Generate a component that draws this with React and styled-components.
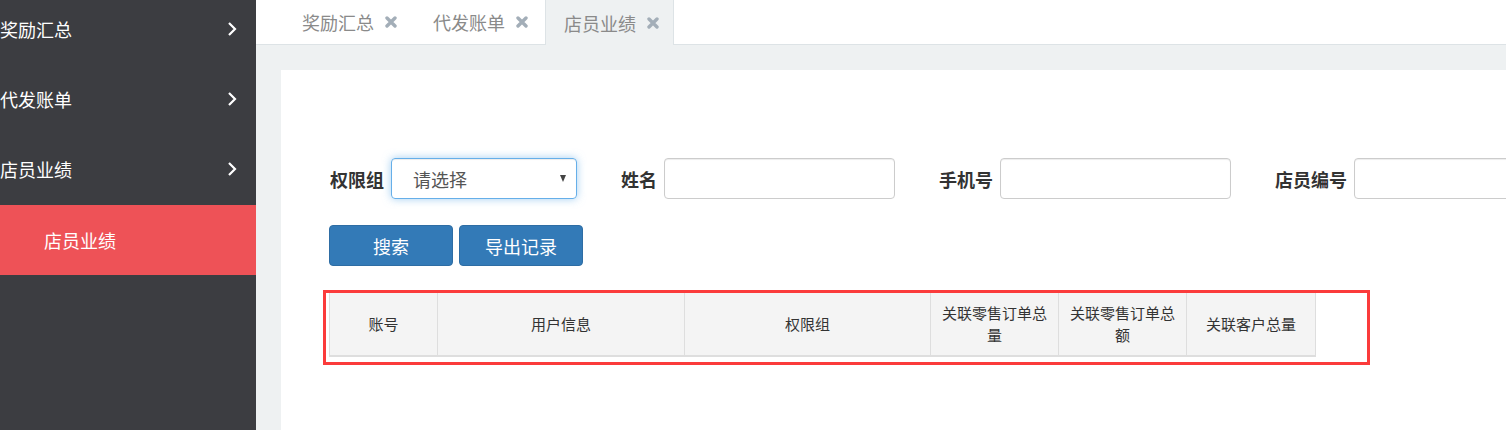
import React from "react";
import styled, { createGlobalStyle } from "styled-components";

const Global = createGlobalStyle`
  html, body, #root { margin: 0; padding: 0; height: 100%; }
  body {
    overflow: hidden;
    font-family: "Noto Sans CJK SC", "Liberation Sans", sans-serif;
    background: #eef1f2;
  }
  * { box-sizing: border-box; }
`;

const Page = styled.div`
  display: flex;
  width: 1506px;
  height: 430px;
  overflow: hidden;
`;

const Sidebar = styled.nav`
  width: 256px;
  flex: 0 0 256px;
  background: #3c3d41;
  display: flex;
  flex-direction: column;
  margin-top: -6px;
`;

const NavItem = styled.div`
  height: 70px;
  flex: none;
  display: flex;
  align-items: center;
  justify-content: space-between;
  padding: 0 19px 0 ${(p) => (p.$sub ? "44px" : "0")};
  background: ${(p) => (p.$active ? "#ee5257" : "transparent")};
  color: #fff;
  font-size: 18px;
  line-height: 1;
  margin-top: ${(p) => (p.$active ? "1px" : "0")};
`;

const Main = styled.div`
  flex: 1;
  min-width: 0;
  display: flex;
  flex-direction: column;
  background: #eef1f2;
`;

const TabBar = styled.div`
  height: 45px;
  background: #fff;
  border-bottom: 1px solid #dde3e6;
  display: flex;
  align-items: stretch;
  padding-left: 27px;
  gap: 2px;
`;

const Tab = styled.div`
  width: 129px;
  display: flex;
  align-items: center;
  padding-left: 18px;
  gap: 11px;
  font-size: 18px;
  color: #8a8a8a;
  background: ${(p) => (p.$active ? "#eef1f2" : "#fff")};
  border-left: 1px solid ${(p) => (p.$active ? "#dde3e6" : "transparent")};
  border-right: 1px solid ${(p) => (p.$active ? "#dde3e6" : "transparent")};
  margin-bottom: ${(p) => (p.$active ? "-1px" : "0")};
`;

const Content = styled.div`
  flex: 1;
  padding: 25px 0 0 25px;
  min-height: 0;
`;

const Panel = styled.div`
  background: #fff;
  height: 100%;
  padding: 88px 0 0 49px;
  overflow: hidden;
`;

const FormRow = styled.div`
  display: flex;
  align-items: center;
  gap: 44px;
  flex-wrap: nowrap;
  white-space: nowrap;
`;

const Field = styled.div`
  display: flex;
  align-items: center;
  gap: 7px;
  flex: none;
`;

const Label = styled.label`
  font-size: 18px;
  font-weight: 700;
  color: #333;
`;

const SelectBox = styled.div`
  width: 186px;
  height: 41px;
  border: 1px solid #66afe9;
  border-radius: 4px;
  box-shadow: inset 0 1px 1px rgba(0, 0, 0, 0.075), 0 0 8px rgba(102, 175, 233, 0.6);
  display: flex;
  align-items: center;
  justify-content: space-between;
  padding: 0 10px 0 21px;
  font-size: 18px;
  color: #555;
`;

const Caret = styled.span`
  width: 0;
  height: 0;
  border-left: 3.5px solid transparent;
  border-right: 3.5px solid transparent;
  border-top: 7px solid #444;
`;

const Input = styled.input`
  width: 231px;
  height: 41px;
  border: 1px solid #ccc;
  border-radius: 4px;
  box-shadow: inset 0 1px 1px rgba(0, 0, 0, 0.075);
  outline: none;
  font-size: 16px;
  padding: 0 12px;
`;

const ButtonRow = styled.div`
  display: flex;
  gap: 6px;
  margin-top: 26px;
  margin-left: -1px;
`;

const Button = styled.button`
  width: 124px;
  height: 41px;
  background: #337ab7;
  border: 1px solid #2e6da4;
  border-radius: 4px;
  color: #fff;
  font-family: inherit;
  font-size: 18px;
  padding: 0;
`;

const Highlight = styled.div`
  margin-top: 24px;
  margin-left: -7px;
  width: 1047px;
  border: 3px solid #fb3b3b;
  padding: 0 0 5px 3px;
`;

const Table = styled.table`
  border-collapse: collapse;
  width: 986px;
  table-layout: fixed;
`;

const Th = styled.th`
  background: #f4f4f4;
  border: 1px solid #dedede;
  border-top: none;
  border-bottom: 2px solid #dedede;
  height: 63px;
  padding: 8px 10px;
  font-size: 15px;
  font-weight: 400;
  line-height: 22px;
  color: #333;
  text-align: center;
  vertical-align: middle;
`;

const Chevron = () => (
  <svg width="10" height="16" viewBox="0 0 10 16">
    <polyline points="2,2 8,8 2,14" fill="none" stroke="#fff" strokeWidth="2.2" />
  </svg>
);

const CloseIcon = () => (
  <svg width="12" height="12" viewBox="0 0 12 12">
    <path d="M2 2 L10 10 M10 2 L2 10" stroke="#a3aeb8" strokeWidth="3.4" strokeLinecap="round" />
  </svg>
);

const columns = [
  { title: "账号", width: 108 },
  { title: "用户信息", width: 247 },
  { title: "权限组", width: 246 },
  { title: "关联零售订单总量", width: 128 },
  { title: "关联零售订单总额", width: 128 },
  { title: "关联客户总量", width: 129 },
];

export default function App() {
  return (
    <>
      <Global />
      <Page>
        <Sidebar>
          <NavItem>
            奖励汇总
            <Chevron />
          </NavItem>
          <NavItem>
            代发账单
            <Chevron />
          </NavItem>
          <NavItem>
            店员业绩
            <Chevron />
          </NavItem>
          <NavItem $active $sub>
            店员业绩
          </NavItem>
        </Sidebar>
        <Main>
          <TabBar>
            <Tab>
              奖励汇总
              <CloseIcon />
            </Tab>
            <Tab>
              代发账单
              <CloseIcon />
            </Tab>
            <Tab $active>
              店员业绩
              <CloseIcon />
            </Tab>
          </TabBar>
          <Content>
            <Panel>
              <FormRow>
                <Field>
                  <Label>权限组</Label>
                  <SelectBox>
                    请选择
                    <Caret />
                  </SelectBox>
                </Field>
                <Field>
                  <Label>姓名</Label>
                  <Input />
                </Field>
                <Field>
                  <Label>手机号</Label>
                  <Input />
                </Field>
                <Field>
                  <Label>店员编号</Label>
                  <Input />
                </Field>
              </FormRow>
              <ButtonRow>
                <Button>搜索</Button>
                <Button>导出记录</Button>
              </ButtonRow>
              <Highlight>
                <Table>
                  <colgroup>
                    {columns.map((c) => (
                      <col key={c.title} style={{ width: c.width }} />
                    ))}
                  </colgroup>
                  <thead>
                    <tr>
                      {columns.map((c) => (
                        <Th key={c.title}>{c.title}</Th>
                      ))}
                    </tr>
                  </thead>
                </Table>
              </Highlight>
            </Panel>
          </Content>
        </Main>
      </Page>
    </>
  );
}
